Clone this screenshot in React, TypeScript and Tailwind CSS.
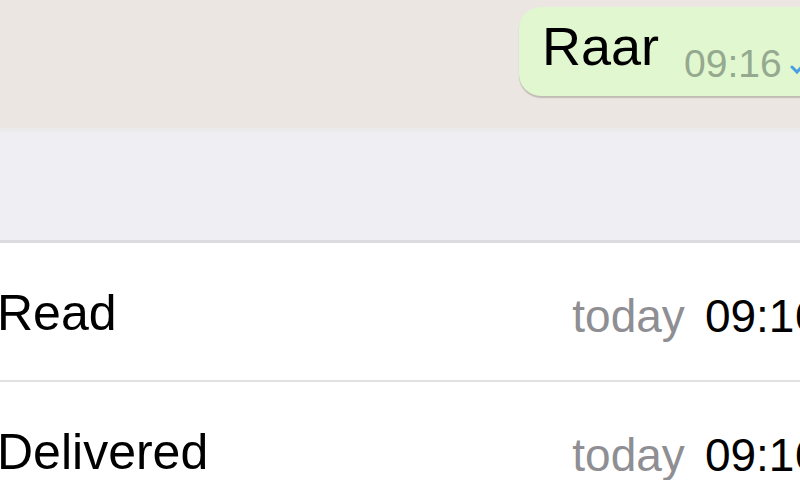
import React from "react";

function Row({ label }: { label: string }) {
  return (
    <div className="bg-white">
      <div className="flex h-[137px] w-[820px] items-start justify-between">
        <span className="ml-[-3px] mt-[40px] text-[50px] leading-[60px] text-black">{label}</span>
        <span className="mt-[45px] flex text-[46px] leading-[56px]">
          <span className="text-[#8e8e93]">today</span>
          <span className="ml-[20px] text-black">09:16</span>
        </span>
      </div>
      <div className="h-[2px] bg-[#e1e1e4]" />
    </div>
  );
}

export default function App() {
  return (
    <div
      className="h-[480px] w-[800px] overflow-hidden bg-white"
      style={{ fontFamily: '"Liberation Sans", Arial, sans-serif' }}
    >
      <div className="flex h-[128px] bg-[#ebe6e1] pt-[7px]">
        <div className="ml-[519px] flex h-[89px] w-[320px] shrink-0 items-start rounded-[22px] bg-[#e1f7cf] pl-[23px] shadow-[0_2px_1px_rgba(120,110,100,0.35)]">
          <span className="mt-[8px] text-[54px] leading-[62px] text-black">Raar</span>
          <span className="ml-[25px] mt-[34px] text-[39px] leading-[46px] text-[#94a98e]">09:16</span>
          <svg className="ml-[8px] mt-[50px]" width="30" height="20" viewBox="0 0 30 20">
            <path d="M2 10 L7 15 L17 4" fill="none" stroke="#4b9fe0" strokeWidth="3" strokeLinecap="round" />
          </svg>
        </div>
      </div>
      <div className="h-[4px] bg-[#ebebee]" />
      <div className="h-[108px] bg-[#efeef3]" />
      <div className="h-[3px] bg-[#dcdbe0]" />
      <Row label="Read" />
      <Row label="Delivered" />
    </div>
  );
}
